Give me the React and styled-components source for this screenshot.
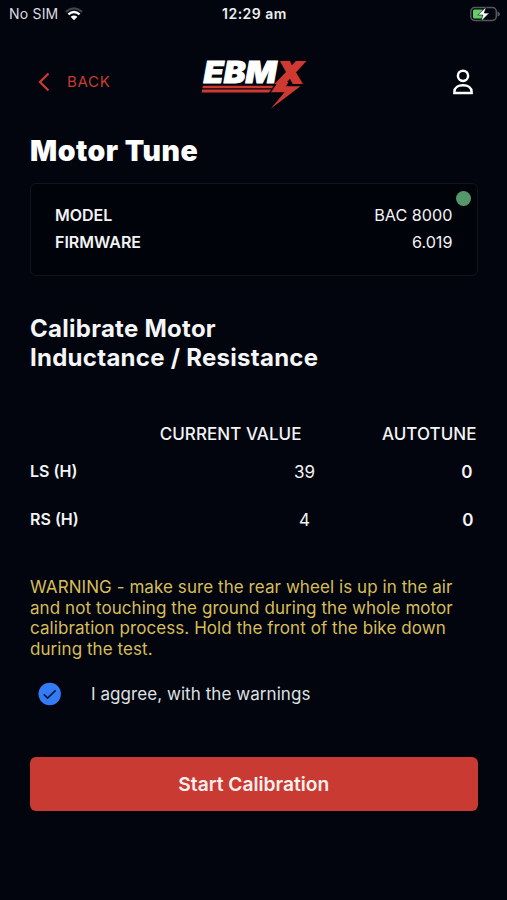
import React, { useState } from "react";
import styled, { createGlobalStyle } from "styled-components";

const GlobalStyle = createGlobalStyle`
  *, *::before, *::after { box-sizing: border-box; }
  body { margin: 0; background: #02050d; }
  button { font: inherit; border: 0; padding: 0; background: none; cursor: pointer; }
`;

const Screen = styled.div`
  width: 507px;
  height: 900px;
  overflow: hidden;
  background: #02050d;
  color: #f3f4f6;
  font-family: Inter, "Liberation Sans", sans-serif;
  font-size: 16px;
`;

const StatusBar = styled.header`
  display: grid;
  grid-template-columns: 1fr auto 1fr;
  align-items: center;
  height: 28px;
  padding: 0 7px 0 9px;
  font-size: 14px;
  line-height: 20px;
  color: #dcdde0;
`;

const Carrier = styled.div`
  display: flex;
  align-items: center;
  gap: 7px;
  letter-spacing: 0.2px;
`;

const Clock = styled.time`
  font-weight: 600;
  color: #eceef1;
  letter-spacing: 0.5px;
`;

const BatteryIcon = styled.svg`
  justify-self: end;
`;

const NavBar = styled.nav`
  display: grid;
  grid-template-columns: 1fr auto 1fr;
  align-items: center;
  height: 107px;
  padding: 0 33px 0 36px;
`;

const BackButton = styled.button`
  display: flex;
  align-items: center;
  gap: 17px;
  color: #c93a33;
  font-size: 15px;
  letter-spacing: 0.7px;
`;

const Logo = styled.svg`
  display: block;
  overflow: visible;
`;

const ProfileButton = styled.button`
  display: flex;
  justify-self: end;
`;

const Content = styled.main`
  padding: 0 29.5px 0 30px;
`;

const Title = styled.h1`
  margin: 0;
  height: 48px;
  font-size: 28.4px;
  font-weight: 900;
  line-height: 32px;
  letter-spacing: 0.5px;
  color: #fff;
`;

const InfoCard = styled.section`
  position: relative;
  height: 93px;
  padding: 18px 24px;
  border: 1px solid #10151d;
  border-radius: 6px;
  background: #01030a;
`;

const StatusDot = styled.span`
  position: absolute;
  top: 6.5px;
  right: 6px;
  width: 15px;
  height: 15px;
  border-radius: 50%;
  background: #53976b;
`;

const InfoRow = styled.div`
  display: flex;
  justify-content: space-between;
  line-height: 27px;
`;

const InfoLabel = styled.span`
  font-size: 16px;
  font-weight: 600;
`;

const InfoValue = styled.span`
  font-size: 16.2px;
`;

const Heading = styled.h2`
  margin: 38px 0 0;
  font-size: 24px;
  font-weight: 700;
  line-height: 29.3px;
  letter-spacing: 0.27px;
  color: #f5f6f8;
`;

const Table = styled.table`
  width: 447px;
  margin-top: 48px;
  border-collapse: collapse;
  table-layout: fixed;
`;

const ColumnHead = styled.th`
  width: ${(p) => p.$width}px;
  height: 28px;
  padding: 0 ${(p) => p.$inset || 0}px 1px 0;
  font-size: 17px;
  font-weight: 500;
  line-height: 27px;
  letter-spacing: 0.05px;
  text-align: right;
  white-space: nowrap;
`;

const RowHead = styled.th`
  height: 47.5px;
  padding: 0 0 2px;
  font-size: 16px;
  font-weight: 600;
  text-align: left;
`;

const Value = styled.td`
  padding: 0 ${(p) => p.$inset}px 0 0;
  font-size: 17px;
  font-weight: ${(p) => (p.$strong ? 600 : 400)};
  text-align: right;
`;

const Warning = styled.p`
  margin: 33.4px 0 0;
  font-size: 17px;
  line-height: 20.7px;
  letter-spacing: 0.07px;
  color: #d7bd59;
  white-space: nowrap;
`;

const Agreement = styled.label`
  display: flex;
  align-items: center;
  gap: 30px;
  height: 24px;
  margin-top: 22.1px;
  padding-left: 8px;
  font-size: 17px;
  letter-spacing: 0.06px;
  color: #dfe1e4;
  cursor: pointer;
`;

const HiddenCheckbox = styled.input`
  appearance: none;
  position: absolute;
  margin: 0;
  opacity: 0;
`;

const StartButton = styled.button`
  display: block;
  width: 100%;
  height: 54px;
  margin-top: 51.5px;
  border-radius: 6px;
  background: #c93a32;
  color: #fff0ee;
  font-size: 19.2px;
  font-weight: 600;
`;

const readings = [
  { name: "LS (H)", current: "39", currentInset: 5, auto: "0", autoInset: 4.5 },
  { name: "RS (H)", current: "4", currentInset: 10, auto: "0", autoInset: 3.5 },
];

function WifiIcon() {
  return (
    <svg width="18" height="14" viewBox="0 0 18 14" fill="none">
      <path d="M.9 4.8Q9 -1.9 17.1 4.8" stroke="#41444b" strokeWidth="2.2" />
      <path d="M3.4 7.4Q9 2.6 14.6 7.4" stroke="#fff" strokeWidth="2.4" />
      <path d="M5.6 9.8Q9 7 12.4 9.8L9 13.2Z" fill="#fff" />
    </svg>
  );
}

function Battery() {
  return (
    <BatteryIcon width="31" height="16" viewBox="0 0 31 16">
      <rect x="1.8" y="1.6" width="25.5" height="12.8" rx="3.8" fill="none" stroke="#55585e" strokeWidth="1.5" />
      <path d="M28.5 5.5Q31 6 31 8T28.5 10.5Z" fill="#55585e" />
      <path d="M5.5 3.5h8v9h-8Q4 12.5 4 11V5Q4 3.5 5.5 3.5Z" fill="#61ce66" />
      <path d="M17.3 .8 8.8 9h5L12 15.4 20.3 7.1h-5Z" fill="#fff" stroke="#02050d" strokeWidth=".6" />
    </BatteryIcon>
  );
}

function BrandLogo() {
  return (
    <Logo width="106" height="52" viewBox="0 0 106 52" role="img" aria-label="EBMX">
      <g fontFamily="Inter, sans-serif" fontWeight="900" fontStyle="italic">
        <text x="1.5" y="27" fontSize="30" fill="#fff" stroke="#fff" strokeWidth=".9" textLength="73" lengthAdjust="spacingAndGlyphs">EBM</text>
        <text x="75.5" y="26.5" fontSize="28.5" fill="#ce3a32" stroke="#ce3a32" strokeWidth="2" textLength="25.5" lengthAdjust="spacingAndGlyphs">X</text>
      </g>
      <g fill="#ce3a32">
        <path d="M.9 29.8H71.5L70 32.2H.4Z" />
        <path d="M.2 33.6H69.2L67 36.4H-.3Z" />
        <path d="M76 26H86.5L84 30.2H98.5L69 52.5 82.5 36.3H69Z" />
      </g>
    </Logo>
  );
}

export default function App() {
  const [agreed, setAgreed] = useState(true);
  return (
    <Screen>
      <GlobalStyle />
      <StatusBar>
        <Carrier>No SIM <WifiIcon /></Carrier>
        <Clock>12:29 am</Clock>
        <Battery />
      </StatusBar>
      <NavBar>
        <BackButton>
          <svg width="14" height="20" viewBox="0 0 14 20" fill="none" stroke="currentColor" strokeWidth="2.3">
            <path d="M12.5 1.5 4 10l8.5 8.5" />
          </svg>
          BACK
        </BackButton>
        <BrandLogo />
        <ProfileButton aria-label="Profile">
          <svg width="22" height="26" viewBox="0 0 22 26" fill="none" stroke="#fff" strokeWidth="2.5">
            <circle cx="11" cy="6.8" r="5.1" />
            <path d="M2.4 24v-1.2c0-4 3.7-6.6 8.6-6.6s8.6 2.6 8.6 6.6V24Z" />
          </svg>
        </ProfileButton>
      </NavBar>
      <Content>
        <Title>Motor Tune</Title>
        <InfoCard>
          <StatusDot />
          <InfoRow><InfoLabel>MODEL</InfoLabel><InfoValue>BAC 8000</InfoValue></InfoRow>
          <InfoRow><InfoLabel>FIRMWARE</InfoLabel><InfoValue>6.019</InfoValue></InfoRow>
        </InfoCard>
        <Heading>Calibrate Motor<br />Inductance / Resistance</Heading>
        <Table>
          <thead>
            <tr>
              <ColumnHead $width={100} />
              <ColumnHead $width={190} $inset={18.5}>CURRENT VALUE</ColumnHead>
              <ColumnHead $width={157} $inset={0.5}>AUTOTUNE</ColumnHead>
            </tr>
          </thead>
          <tbody>
            {readings.map((r) => (
              <tr key={r.name}>
                <RowHead scope="row">{r.name}</RowHead>
                <Value $inset={r.currentInset}>{r.current}</Value>
                <Value $inset={r.autoInset} $strong>{r.auto}</Value>
              </tr>
            ))}
          </tbody>
        </Table>
        <Warning>
          WARNING - make sure the rear wheel is up in the air<br />
          and not touching the ground during the whole motor<br />
          calibration process. Hold the front of the bike down<br />
          during the test.
        </Warning>
        <Agreement>
          <HiddenCheckbox type="checkbox" checked={agreed} onChange={() => setAgreed(!agreed)} />
          <svg width="23" height="24" viewBox="0 0 23 24" fill="none">
            <circle cx="11.7" cy="12" r="11.2" fill="#347bf6" />
            {agreed && <path d="m5.8 12.3 3.8 3.7 8-7.6" stroke="#071a3b" strokeWidth="1.7" />}
          </svg>
          I aggree, with the warnings
        </Agreement>
        <StartButton>Start Calibration</StartButton>
      </Content>
    </Screen>
  );
}
